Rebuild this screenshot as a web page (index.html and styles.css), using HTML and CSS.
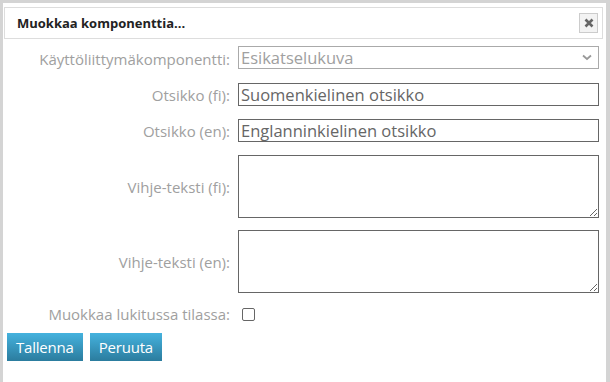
FILE: index.html
```html
<!DOCTYPE html>
<html>
  <head>
    <title>Muokkaa komponenttia</title>
    <link rel="stylesheet" href="styles.css">
  </head>
  <body>
    <div class="dialog">
      <div class="titlebar">
        <span class="title">Muokkaa komponenttia...</span>
        <button class="close" title="Sulje">
          <svg width="10" height="10" viewBox="0 0 10 10">
            <path d="M1.5 1.5 L8.5 8.5 M8.5 1.5 L1.5 8.5" stroke="#666" stroke-width="2.6" />
          </svg>
        </button>
      </div>

      <form class="form" onsubmit="event.preventDefault();">
        <label class="label">Käyttöliittymäkomponentti:</label>
        <div class="select">
          <span>Esikatselukuva</span>
          <svg width="10" height="7" viewBox="0 0 10 7">
            <path d="M1 1.5 L5 5 L9 1.5" stroke="#999" stroke-width="1.8" fill="none" />
          </svg>
        </div>

        <label class="label">Otsikko (fi):</label>
        <input type="text" class="text" value="Suomenkielinen otsikko" />

        <label class="label">Otsikko (en):</label>
        <input type="text" class="text" value="Englanninkielinen otsikko" />

        <label class="label">Vihje-teksti (fi):</label>
        <textarea class="area"></textarea>

        <label class="label">Vihje-teksti (en):</label>
        <textarea class="area"></textarea>

        <label class="label">Muokkaa lukitussa tilassa:</label>
        <div class="check-cell"><span class="check"></span></div>
      </form>

      <div class="buttons">
        <button class="btn">Tallenna</button>
        <button class="btn">Peruuta</button>
      </div>
    </div>
  </body>
</html>
```

FILE: styles.css
```css
body {
  margin: 0;
  background-color: #d4d4d4;
  font-family: "Open Sans", sans-serif;
}

.dialog {
  margin-top: 3px;
  margin-left: 3px;
  width: 603px;
  height: 379px;
  background-color: #fff;
  box-sizing: border-box;
  padding: 4px 3px 0 1px;
}

.titlebar {
  display: flex;
  align-items: center;
  justify-content: space-between;
  height: 32px;
  border: 1px solid #ddd;
  box-sizing: border-box;
  padding: 0 4px 0 12px;
}

.title {
  font-size: 13px;
  font-weight: bold;
  color: #222;
}

.close {
  width: 19px;
  height: 20px;
  padding: 0;
  border: 1px solid #ccc;
  background-color: #f3f3f3;
  display: flex;
  align-items: center;
  justify-content: center;
}

.form {
  display: grid;
  grid-template-columns: 226px 361px;
  column-gap: 8px;
  row-gap: 12px;
  align-items: center;
  margin-top: 7px;
}

.label {
  text-align: right;
  color: #a0a0a0;
  font-size: 15px;
  line-height: 18px;
}

.select {
  height: 23px;
  box-sizing: border-box;
  border: 1px solid #aaa;
  display: flex;
  align-items: center;
  justify-content: space-between;
  padding: 0 6px 0 2px;
  color: #a0a0a0;
  font-size: 16.5px;
  margin-bottom: 2px;
}

.text {
  display: block;
  width: 100%;
  height: 23px;
  box-sizing: border-box;
  border: 1px solid #666;
  padding: 0 2px 1px;
  font-family: "Open Sans", sans-serif;
  font-size: 16.5px;
  color: #666;
  outline: none;
  margin: 0 0 1px;
}

.area {
  display: block;
  width: 100%;
  height: 63px;
  box-sizing: border-box;
  border: 1px solid #666;
  resize: vertical;
  margin: 0;
}

.check-cell {
  height: 18px;
  display: flex;
  align-items: center;
}

.check {
  display: block;
  width: 11px;
  height: 11px;
  border: 1px solid #666;
  border-radius: 2px;
  margin-left: 4px;
}

.buttons {
  display: flex;
  gap: 7px;
  padding-left: 3px;
  margin-top: 10px;
}

.btn {
  height: 28px;
  padding: 0 9px;
  border: none;
  background: linear-gradient(#45b2de, #2b7c9e);
  color: #fff;
  font-family: "Open Sans", sans-serif;
  font-size: 15px;
  letter-spacing: -0.2px;
}
```
